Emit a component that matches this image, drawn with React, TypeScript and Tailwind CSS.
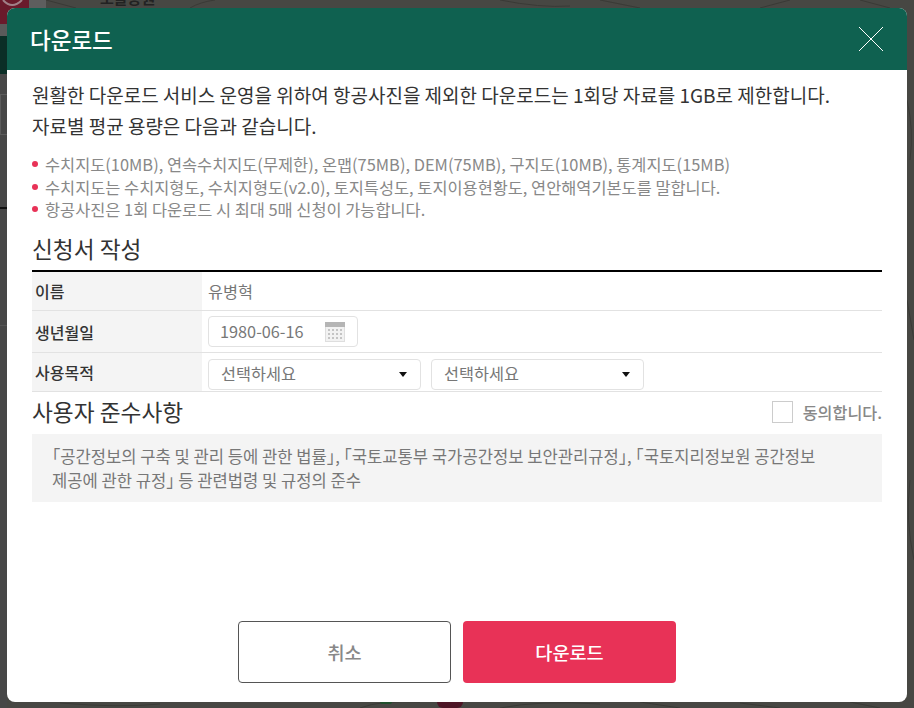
const FONT = "font-['Noto_Sans_CJK_KR','Noto_Sans',sans-serif]";

function Select() {
  return (
    <div className="-mt-[1px] flex h-[31px] w-[213px] items-center justify-between rounded-[4px] border border-[#e2e2e2] pl-[12px] pr-[13px] text-[16.3px] text-[#777]">
      <span className="-mt-[2px]">선택하세요</span>
      <span className="h-0 w-0 border-x-[4.5px] border-t-[5px] border-x-transparent border-t-[#111]" />
    </div>
  );
}

function CalendarIcon() {
  return (
    <svg width="20" height="20" viewBox="0 0 20 20">
      <rect x="0" y="0" width="20" height="20" fill="#dedede" />
      <rect x="0" y="0" width="20" height="5" fill="#b5b5b5" />
      <rect x="1" y="5" width="18" height="14" fill="#f2f2f2" />
      {[3, 7, 11, 15].map((x) =>
        [7, 11, 15].map((y) => <rect key={`${x}-${y}`} x={x} y={y} width="2" height="2" fill="#c4c4c4" />),
      )}
    </svg>
  );
}

function Row({ label, className, children }: { label: string; className: string; children: React.ReactNode }) {
  return (
    <div className={`flex border-b border-[#e2e2e2] ${className}`}>
      <div className="flex w-[170px] items-center bg-[#f4f4f4] pl-[3px] text-[16px] font-medium text-[#333]">{label}</div>
      <div className="flex flex-1 items-center pl-[6px]">{children}</div>
    </div>
  );
}

// Half-width brackets, same as the reference's font draws them
function Bracket({ children }: { children: string }) {
  return <span className="[font-feature-settings:'halt']">{children}</span>;
}

export default function App() {
  return (
    <div className={`relative flex h-[708px] w-[914px] overflow-hidden bg-[#474743] pl-[7px] pt-[8px] ${FONT}`}>
      {/* dimmed page behind the dialog */}
      <div className="absolute left-0 top-0 h-[24px] w-[29px] bg-[#6a1a2b]" />
      <div className="absolute left-[29px] top-0 h-[8px] w-[17px] bg-[#5e5e5e]" />
      <div className="absolute left-0 top-[24px] h-[12px] w-[7px] bg-[#5a5a5a]" />
      <div className="absolute left-0 top-[36px] h-[38px] w-[7px] bg-[#0b2e26]" />
      <div className="absolute left-0 top-[74px] h-[634px] w-[7px] bg-[#474747]" />
      <div className="absolute left-0 top-[94px] h-[41px] w-[7px] border-y border-l border-[#5c5c5c]" />
      <div className="absolute left-0 top-[207px] h-[2px] w-[7px] bg-[#111]" />
      <div className="absolute left-0 top-[325px] h-px w-[7px] bg-[#555]" />
      <svg className="absolute left-0 top-0" width="914" height="708" fill="none" stroke="#3a3a36" strokeWidth="1">
        <path d="M3 0Q12 10 22 0" stroke="#a08088" strokeWidth="2" />
        <path d="M46 0L76 8M190 8Q200 2 215 0M500 0Q540 8 570 6M600 0L640 8M760 8L790 0M860 0L890 8" />
        <path d="M60 703Q120 708 160 704M360 708Q380 700 420 702M500 708Q540 700 600 704M640 702L680 708M740 703L780 708M850 702L880 708" />
        <path d="M907 100Q914 130 910 160M907 300L914 340M910 480Q905 520 914 560" />
      </svg>
      <div className="absolute left-[380px] top-[702px] h-[2px] w-[12px] rounded-b-full bg-[#20502c]" />
      <div className="absolute bottom-0 left-[437px] h-[6px] w-[26px] rounded-b-full bg-[#4e1526]" />
      <span className="absolute left-[100px] top-[-12px] text-[15px] font-bold leading-[20px] text-[#222]">노을공원</span>

      <div className="relative flex h-[694px] w-[900px] flex-col overflow-hidden rounded-[8px] bg-white">
        <header className="flex h-[62px] shrink-0 items-center justify-between bg-[#0f6150] pl-[23px] pr-[23px] text-white">
          <h2 className="text-[22.5px] font-medium leading-none">다운로드</h2>
          <svg width="26" height="26" viewBox="0 0 26 26" stroke="#fff" strokeWidth="1" fill="none">
            <path d="M1 1L25 25M25 1L1 25" />
          </svg>
        </header>

        <div className="flex flex-1 flex-col px-[25px]">
          <div className="mt-[9px] text-[19px] leading-[31px] text-[#333]">
            <p>원활한 다운로드 서비스 운영을 위하여 항공사진을 제외한 다운로드는 1회당 자료를 1GB로 제한합니다.</p>
            <p>자료별 평균 용량은 다음과 같습니다.</p>
          </div>

          <ul className="mt-[12px] text-[16.4px] leading-[22.5px] text-[#888]">
            {[
              "수치지도(10MB), 연속수치지도(무제한), 온맵(75MB), DEM(75MB), 구지도(10MB), 통계지도(15MB)",
              "수치지도는 수치지형도, 수치지형도(v2.0), 토지특성도, 토지이용현황도, 연안해역기본도를 말합니다.",
              "항공사진은 1회 다운로드 시 최대 5매 신청이 가능합니다.",
            ].map((t) => (
              <li key={t} className="flex items-center gap-[7px] whitespace-nowrap">
                <span className="h-[6px] w-[6px] shrink-0 rounded-full bg-[#e83257]" />
                {t}
              </li>
            ))}
          </ul>

          <h3 className="mt-[13.5px] text-[22.7px] leading-[30px] text-[#333]">신청서 작성</h3>
          <div className="mt-[6px] border-t-2 border-black">
            <Row label="이름" className="h-[39px]">
              <span className="text-[16.3px] text-[#777]">유병혁</span>
            </Row>
            <Row label="생년월일" className="h-[42px]">
              <div className="flex h-[31px] w-[150px] items-center justify-between rounded-[4px] border border-[#e2e2e2] pl-[11px] pr-[12px] text-[16.3px] text-[#777]">
                <span>1980-06-16</span>
                <CalendarIcon />
              </div>
            </Row>
            <Row label="사용목적" className="h-[39px]">
              <div className="flex gap-[10px] pt-[6px]">
                <Select />
                <Select />
              </div>
            </Row>
          </div>

          <div className="mt-[4px] flex h-[33px] items-center justify-between">
            <h3 className="text-[22.7px] text-[#333]">사용자 준수사항</h3>
            <label className="flex items-center gap-[10px] text-[16.2px] font-medium text-[#888]">
              <span className="h-[22px] w-[21px] border border-[#ccc]" />
              동의합니다.
            </label>
          </div>

          <div className="mt-[5px] h-[68px] whitespace-nowrap bg-[#f4f4f4] px-[20px] pt-[10px] text-[16.6px] leading-[24px] text-[#777]">
            <Bracket>「</Bracket>공간정보의 구축 및 관리 등에 관한 법률<Bracket>」</Bracket>, <Bracket>「</Bracket>국토교통부 국가공간정보 보안관리규정<Bracket>」</Bracket>, <Bracket>「</Bracket>국토지리정보원 공간정보
            <br />
            제공에 관한 규정<Bracket>」</Bracket> 등 관련법령 및 규정의 준수
          </div>

          <div className="mt-auto mb-[19px] flex justify-center gap-[12px]">
            <button className="h-[62px] w-[213px] rounded-[4px] border border-[#555] bg-white text-[18.6px] font-medium text-[#888]">취소</button>
            <button className="h-[62px] w-[213px] rounded-[4px] bg-[#e83257] text-[18.6px] font-medium text-white">다운로드</button>
          </div>
        </div>
      </div>
    </div>
  );
}
